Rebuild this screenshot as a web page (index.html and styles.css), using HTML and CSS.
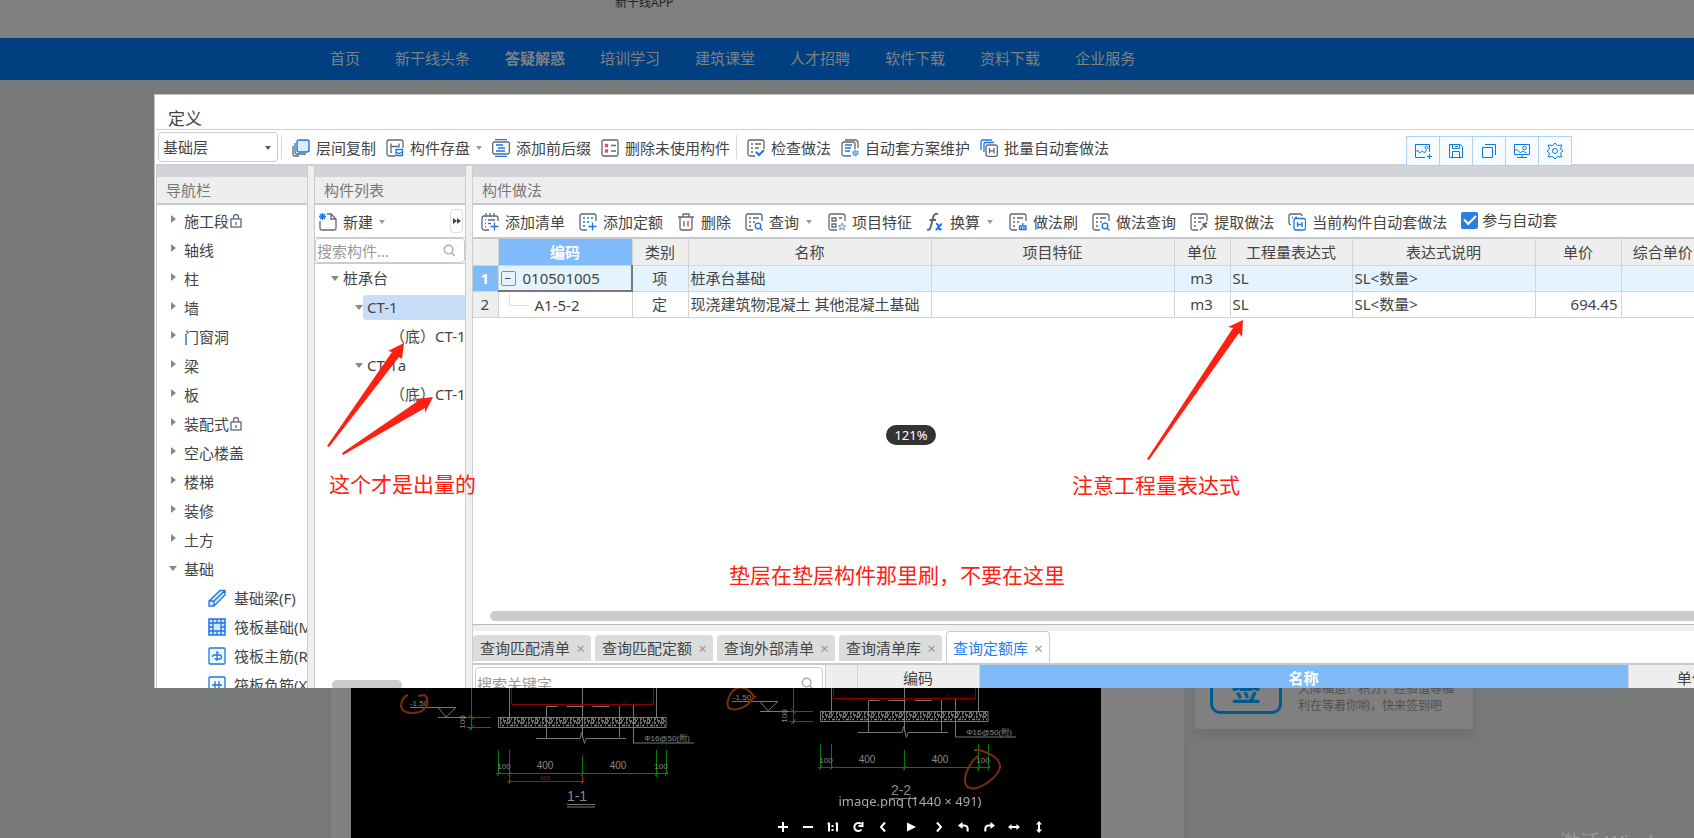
FILE: index.html
```html
<!DOCTYPE html>
<html lang="zh-CN">
<head>
<meta charset="utf-8">
<title>新干线 - 答疑解惑</title>
<link rel="stylesheet" href="styles.css">
</head>
<body>
<svg class="sprite" aria-hidden="true">
  <symbol id="i-copy" viewBox="0 0 18 18"><rect x="5" y="1" width="12" height="12" rx="2" fill="#dcebff" stroke="#1e74e6" stroke-width="1.4"/><path d="M3 4v9a2 2 0 0 0 2 2h9M1 7v8a2 2 0 0 0 2 2h4" class="g"/></symbol>
  <symbol id="i-disk" viewBox="0 0 18 18"><path d="M9 17H3a2 2 0 0 1-2-2V3a2 2 0 0 1 2-2h12a2 2 0 0 1 2 2v6M5 14V4.500M13 4.500v4M5 7.500h8" class="g"/><path d="M10 10.500h6.500v6H10zM10 13l3.200 1.500 3.300-1.500" class="b"/></symbol>
  <symbol id="i-affix" viewBox="0 0 18 18"><path d="M3 .7h12M3 17.300h12M4 6h7M6 9h7M4 12h9" class="b"/><rect x=".7" y="3" width="16.600" height="12" rx="1.500" class="g"/></symbol>
  <symbol id="i-unused" viewBox="0 0 18 18"><rect x="1" y="1" width="16" height="16" rx="1.500" class="g"/><path d="M10 6.500h5M10 12h5" class="g"/><path d="M4 5l3 3M7 5L4 8M4 10.500l3 3m0-3l-3 3" class="r"/></symbol>
  <symbol id="i-check" viewBox="0 0 18 18"><path d="M8 17H3a2 2 0 0 1-2-2V3a2 2 0 0 1 2-2h12a2 2 0 0 1 2 2v7M4 5h2m2 0h6M4 9h2m2 0h4M4 13h2" class="g"/><path d="M9 13l3 3 5-5" class="b w"/></symbol>
  <symbol id="i-plan" viewBox="0 0 18 18"><path d="M10 17H3a2 2 0 0 1-2-2V5a2 2 0 0 1 2-2h9a2 2 0 0 1 2 2v5M4 1h10a3 3 0 0 1 3 3v5" class="g"/><path d="M4 6h7M4 9h6M4 12h5" class="b"/><circle cx="14.500" cy="14" r="2.600" fill="#8fbcf8" stroke="#5f9df0" stroke-width="1.600" stroke-dasharray="1.700 1"/></symbol>
  <symbol id="i-batch" viewBox="0 0 18 18"><path d="M1 11V3a2 2 0 0 1 2-2h9M4 13V5a1.500 1.500 0 0 1 1.500-1.500H14" class="b"/><rect x="6" y="6" width="11.300" height="11.300" rx="2" class="g"/><path d="M9.500 9v5.500m4.500-5.500v5.500m-4.500-2.700H14" class="g"/></symbol>
  <symbol id="i-lock" viewBox="0 0 12 14"><rect x="1" y="5" width="10" height="8" class="g"/><path d="M3.500 5V3a2.500 2.500 0 0 1 5 0v2M6 8v3" class="g"/></symbol>
  <symbol id="i-new" viewBox="0 0 18 18"><path d="M1 8v7.500A1.500 1.500 0 0 0 2.500 17h13a1.500 1.500 0 0 0 1.500-1.500V6l-5-5H8M12 1v5h5" class="g"/><path d="M1 1l5 5M6 1L1 6M3.500 0v7M0 3.500h7" class="b"/></symbol>
  <symbol id="i-find" viewBox="0 0 14 14"><circle cx="6" cy="6" r="4.600" fill="none" stroke="#aaa" stroke-width="1.500"/><path d="M9.500 9.500L12.500 13" stroke="#aaa" stroke-width="1.500"/></symbol>
  <symbol id="i-addlist" viewBox="0 0 18 18"><path d="M8 17H3a2 2 0 0 1-2-2V5a2 2 0 0 1 2-2h12a2 2 0 0 1 2 2v3M5 0v4M9 0v4M13 0v4M4 7h1m2 0h7M4 10.500h1m2 0h3M4 14h1" class="g"/><path d="M13.500 9.500v8M9.500 13.500h8" class="b"/></symbol>
  <symbol id="i-addq" viewBox="0 0 18 18"><path d="M8 17H3a2 2 0 0 1-2-2V3a2 2 0 0 1 2-2h12a2 2 0 0 1 2 2v5" class="g"/><path d="M4 5h2m2 0h2m2 0h2M4 9h2m2 0h2M4 13h2M13.500 9.500v8M9.500 13.500h8" class="b"/></symbol>
  <symbol id="i-trash" viewBox="0 0 18 18"><path d="M1 4h16M6 3.500V1h6v2.500M3 4v11a2 2 0 0 0 2 2h8a2 2 0 0 0 2-2V4" class="g"/><path d="M7 8v5.500M11 8v5.500" class="r"/></symbol>
  <symbol id="i-query" viewBox="0 0 18 18"><path d="M8 17H3a2 2 0 0 1-2-2V3a2 2 0 0 1 2-2h12a2 2 0 0 1 2 2v5M4 5h2m2 0h6M4 9h2m2 0h2M4 13h2" class="g"/><circle cx="13" cy="13" r="2.800" class="b"/><path d="M15 15l2.500 2.500" class="b"/></symbol>
  <symbol id="i-feat" viewBox="0 0 18 18"><path d="M9 17H3a2 2 0 0 1-2-2V3a2 2 0 0 1 2-2h12a2 2 0 0 1 2 2v5M4 5h4v3H4zM11 5h3M4 11h4v3H4z" class="g"/><path d="M14 10l1.200 2.500 2.500.3-1.900 1.700.6 2.500-2.400-1.300-2.400 1.300.6-2.500-1.900-1.700 2.500-.3z" fill="#cfe3ff" stroke="#5f9df0"/></symbol>
  <symbol id="i-fx" viewBox="0 0 18 18"><path d="M1 16.500c2 1 3.300-.5 4-3.500L7 5c.8-3.500 2.500-5 5-4M3.500 7h6.500" class="g w"/><path d="M10 11c2-.5 2 1 2.500 3s1 3 3 2M16 11c-2 0-4 5.500-6.500 5.500" class="b w"/></symbol>
  <symbol id="i-brush" viewBox="0 0 18 18"><path d="M8 17H3a2 2 0 0 1-2-2V3a2 2 0 0 1 2-2h12a2 2 0 0 1 2 2v5M4 5h2m2 0h6M4 9h2m2 0h2M4 13h2" class="g"/><path d="M10.500 16.500v-3.500h6.500v3.500zM13.800 10v3M12.500 14v2.500M15 14v2.500" class="b"/></symbol>
  <symbol id="i-pick" viewBox="0 0 18 18"><path d="M8 17H3a2 2 0 0 1-2-2V3a2 2 0 0 1 2-2h12a2 2 0 0 1 2 2v5M4 5h2m2 0h6M4 9h2m2 0h3M4 13h2M10 17l5-5" class="g"/><path d="M12.500 10.500l4 4M14 12l3-2.500" class="g w"/></symbol>
  <symbol id="i-cur" viewBox="0 0 18 18"><path d="M3 12a2 2 0 0 1-2-2V3a2 2 0 0 1 2-2h9a2 2 0 0 1 2 2M4 4.500h1m2 0h2" class="g"/><rect x="6" y="5.500" width="11.500" height="11.500" rx="2" class="b"/><path d="M9.500 9v5m4.500-5v5m-4.500-2.500H14" class="b"/></symbol>
  <symbol id="i-beam" viewBox="0 0 18 18"><path d="M1 12L12 1.500h5V6L6 17H1zM1 12h5v5M6 12L17 1.500" fill="#d6e8ff" stroke="#1e74e6" stroke-width="1.300"/></symbol>
  <symbol id="i-raft" viewBox="0 0 18 18"><rect x="1" y="1" width="16" height="16" fill="#d6e8ff" stroke="#1e74e6" stroke-width="1.500"/><path d="M5 1v16M9 1v4m0 8v4M13 1v16M1 5h16M1 9h4m8 0h4M1 13h16" class="b"/></symbol>
  <symbol id="i-main" viewBox="0 0 18 18"><rect x="1" y="1" width="16" height="16" rx="1" fill="#f2f8ff" stroke="#1e74e6" stroke-width="1.300"/><path d="M9 14V5l1.500 1M4.500 10q0-2 2-2h5q2 0 2 2t-2 2h-5" class="b"/></symbol>
  <symbol id="i-neg" viewBox="0 0 18 18"><rect x="1" y="1" width="16" height="16" rx="1" fill="#f2f8ff" stroke="#1e74e6" stroke-width="1.300"/><path d="M4 9h10M7 5v8q0 2-2 2M11 5v8q0 2 2 2" class="b"/></symbol>
  <symbol id="s-add" viewBox="0 0 18 18"><path d="M11 15.500H1.500v-13h14V10M1.500 10l2-2 2 3 3-2 2 2 2-3M15.500 12v5M13 14.500h5" class="s"/><circle cx="12.500" cy="5.500" r="1.500" class="s"/></symbol>
  <symbol id="s-save" viewBox="0 0 18 18"><path d="M2.500 2.500h11l2 2v11h-13zM5.500 2.500v4h7v-4M5.500 15.500v-6h7v6M8 4.500h3" class="s"/></symbol>
  <symbol id="s-copy" viewBox="0 0 18 18"><path d="M2.500 5.500h10v10h-10zM5 2.500h10.500V13" class="s"/></symbol>
  <symbol id="s-screen" viewBox="0 0 18 18"><path d="M1.500 2.500h15v10h-15zM1.500 9l2-2 4 4 2-2 4 2M9 12.500v3M4 15.500h10" class="s"/><circle cx="11.500" cy="6" r="1.800" class="s"/></symbol>
  <symbol id="s-gear" viewBox="0 0 18 18"><path d="M9 1l2.300 2.500 4.500-.5-1.300 4 2.500 2-2.500 2 1.300 4-4.500-.5L9 17l-2.300-2.500-4.500.5 1.300-4L1 9l2.500-2-1.300-4 4.500.5z" class="s"/><circle cx="9" cy="9" r="2.500" class="s"/></symbol>
</svg>

<header class="site-top"><a class="app-link" href="#">新干线APP</a></header>
<nav class="site-nav">
  <a href="#">首页</a><a href="#">新干线头条</a><a class="current" href="#">答疑解惑</a><a href="#">培训学习</a><a href="#">建筑课堂</a><a href="#">人才招聘</a><a href="#">软件下载</a><a href="#">资料下载</a><a href="#">企业服务</a>
</nav>
<main class="page">
  <article class="post">
    <div class="post-image">
      <svg class="cad" width="750" height="150" viewBox="351 688 750 150">
        <defs>
          <g id="section" fill="none">
            <g stroke="#777">
              <path d="M410 707.500h46l-10 9.500-8-9.500M438 717.500h29M509.500 680v37M656.500 680v37M582.500 680v58"/>
              <path d="M546.500 706.500h11m9 0h17m9 0h17m9 0h1v31M546.500 706.500v31.500M536 738.500h44l1.500-6 3 11 1.500-5h40M633.500 704v39h60.500"/>
              <rect x="498.500" y="717.500" width="167.500" height="10"/>
            </g>
            <g stroke="#8c8c8c" stroke-width="1.600">
              <path d="M500 719h165" stroke-dasharray="2 1 1 3 3 1 1 2"/>
              <path d="M500 721h165" stroke-dasharray="1 2 3 1 1 1 2 3"/>
              <path d="M500 723h165" stroke-dasharray="2 2 1 1 4 2 1 1"/>
              <path d="M500 725.500h165" stroke-dasharray="1 1 2 3 1 2 3 1"/>
            </g>
            <path d="M511.500 680v24.500h142V680" stroke="#8b0000"/>
            <path d="M623 702.500l2-2 2 2-2 2zM649 702.500l2-2 2 2-2 2z" stroke="#8b0000" stroke-width=".7"/>
            <path d="M471.500 680v50M467 717.500h24M467 727.500h24M469 715l5 5M469 730l5-5M498.500 750v25M509.500 750v25M582.500 756v20M656.500 750v27M666.500 750v25M496 773.500h172M497 776l3-4M508 776l3-4M581 776l3-4M655 776l3-4M665 776l3-4" stroke="#008000"/>
            <g class="dim">
              <text x="504" y="769">100</text><text class="big" x="545" y="769">400</text><text class="big" x="618" y="769">400</text><text x="661" y="769">100</text>
              <text x="462" y="725" transform="rotate(-90 462 722)">100</text>
              <text x="667" y="741">Φ16@50(附)</text>
            </g>
          </g>
        </defs>
        <use href="#section"/>
        <use href="#section" transform="translate(322 -6)"/>
        <g class="dim"><text x="419" y="706">-1.50</text><text x="742" y="700">-1.50</text><text class="sec" x="577" y="801">1-1</text><text class="sec" x="901" y="795">2-2</text></g>
        <path d="M567 804.500h28M567 807h28M889 798.500h28" stroke="#777"/>
        <g fill="none" stroke="#7d2e08">
          <path d="M509.500 774v10M582.500 774v10M507 781.500h78M508 783l3-3M581 783l3-3"/>
          <path d="M408 695c-6 2-9 11-5 15s15 4 20 0 6-13 1-15l-6 1" stroke-width="2"/>
          <path d="M754 697c-5-9-14-12-20-7s-8 15-5 18 13 1 18-3 7-10 9-8" stroke-width="2"/>
          <path d="M974 750c10-1 27 8 26 17s-20 24-30 21-4-23 9-33" stroke-width="2"/>
        </g>
        <text class="orange" x="545" y="780">400</text>
      </svg>
    </div>
  </article>
  <aside class="signin">
    <div class="signin-box">签</div>
    <p class="signin-text">天降福运！积分，经验值等福利在等着你哟，快来签到吧</p>
  </aside>
</main>

<section class="viewer">
  <div class="title">定义</div>
  <div class="bar bar-top">
    <select class="floor" aria-label="楼层"><option>基础层</option></select>
    <i class="sep"></i>
    <button class="tool"><svg><use href="#i-copy"/></svg>层间复制</button>
    <button class="tool"><svg><use href="#i-disk"/></svg>构件存盘<i class="caret"></i></button>
    <button class="tool"><svg><use href="#i-affix"/></svg>添加前后缀</button>
    <button class="tool"><svg><use href="#i-unused"/></svg>删除未使用构件</button>
    <i class="sep"></i>
    <button class="tool"><svg><use href="#i-check"/></svg>检查做法</button>
    <button class="tool"><svg><use href="#i-plan"/></svg>自动套方案维护</button>
    <button class="tool"><svg><use href="#i-batch"/></svg>批量自动套做法</button>
  </div>
  <div class="panes">
    <section class="pane pane-nav">
      <h2>导航栏</h2>
      <ul class="nav-tree">
        <li><i class="closed"></i>施工段<svg class="lock"><use href="#i-lock"/></svg></li>
        <li><i class="closed"></i>轴线</li>
        <li><i class="closed"></i>柱</li>
        <li><i class="closed"></i>墙</li>
        <li><i class="closed"></i>门窗洞</li>
        <li><i class="closed"></i>梁</li>
        <li><i class="closed"></i>板</li>
        <li><i class="closed"></i>装配式<svg class="lock"><use href="#i-lock"/></svg></li>
        <li><i class="closed"></i>空心楼盖</li>
        <li><i class="closed"></i>楼梯</li>
        <li><i class="closed"></i>装修</li>
        <li><i class="closed"></i>土方</li>
        <li><i class="open"></i>基础</li>
        <li class="sub"><svg><use href="#i-beam"/></svg>基础梁(F)</li>
        <li class="sub"><svg><use href="#i-raft"/></svg>筏板基础(M)</li>
        <li class="sub"><svg><use href="#i-main"/></svg>筏板主筋(R)</li>
        <li class="sub"><svg><use href="#i-neg"/></svg>筏板负筋(X)</li>
      </ul>
    </section>
    <section class="pane pane-list">
      <h2>构件列表</h2>
      <div class="bar bar-list">
        <button class="tool"><svg><use href="#i-new"/></svg>新建<i class="caret"></i></button>
        <button class="more" aria-label="更多"><i></i><i></i></button>
      </div>
      <label class="search"><input type="text" placeholder="搜索构件..." aria-label="搜索构件"><svg><use href="#i-find"/></svg></label>
      <ul class="part-tree">
        <li class="lv1"><i class="open"></i><span>桩承台</span></li>
        <li class="lv2 picked"><i class="open"></i><span>CT-1</span></li>
        <li class="lv3"><span>（底）CT-1</span></li>
        <li class="lv2"><i class="open"></i><span>CT-1a</span></li>
        <li class="lv3"><span>（底）CT-1</span></li>
      </ul>
      <div class="thumb thumb-list"></div>
    </section>
    <section class="pane pane-main">
      <h2>构件做法</h2>
      <div class="bar bar-main">
        <button class="tool"><svg><use href="#i-addlist"/></svg>添加清单</button>
        <button class="tool"><svg><use href="#i-addq"/></svg>添加定额</button>
        <button class="tool"><svg><use href="#i-trash"/></svg>删除</button>
        <button class="tool"><svg><use href="#i-query"/></svg>查询<i class="caret"></i></button>
        <button class="tool"><svg><use href="#i-feat"/></svg>项目特征</button>
        <button class="tool"><svg><use href="#i-fx"/></svg>换算<i class="caret"></i></button>
        <button class="tool"><svg><use href="#i-brush"/></svg>做法刷</button>
        <button class="tool"><svg><use href="#i-query"/></svg>做法查询</button>
        <button class="tool"><svg><use href="#i-pick"/></svg>提取做法</button>
        <button class="tool"><svg><use href="#i-cur"/></svg>当前构件自动套做法</button>
        <label class="auto"><input type="checkbox" checked>参与自动套</label>
      </div>
      <div class="grid-wrap">
        <table class="grid">
          <colgroup><col class="c-no"><col class="c-code"><col class="c-kind"><col class="c-name"><col class="c-name"><col class="c-unit"><col class="c-expr"><col class="c-desc"><col class="c-price"><col class="c-total"></colgroup>
          <thead><tr><th></th><th class="hot">编码</th><th>类别</th><th>名称</th><th>项目特征</th><th>单位</th><th>工程量表达式</th><th>表达式说明</th><th>单价</th><th>综合单价</th></tr></thead>
          <tbody>
            <tr class="sel"><th>1</th><td class="cell-on"><button class="fold" aria-label="折叠">−</button>010501005</td><td class="mid">项</td><td>桩承台基础</td><td></td><td class="mid">m3</td><td>SL</td><td>SL&lt;数量&gt;</td><td></td><td></td></tr>
            <tr><th>2</th><td class="child"><i class="elbow"></i>A1-5-2</td><td class="mid">定</td><td>现浇建筑物混凝土 其他混凝土基础</td><td></td><td class="mid">m3</td><td>SL</td><td>SL&lt;数量&gt;</td><td class="num">694.45</td><td></td></tr>
          </tbody>
        </table>
        <div class="thumb thumb-main"></div>
      </div>
      <div class="tabs">
        <button>查询匹配清单<i>×</i></button><button>查询匹配定额<i>×</i></button><button>查询外部清单<i>×</i></button><button>查询清单库<i>×</i></button><button class="on">查询定额库<i>×</i></button>
      </div>
      <div class="lower">
        <div class="lower-left"><label class="search"><input type="text" placeholder="搜索关键字..." aria-label="搜索关键字"><svg><use href="#i-find"/></svg></label></div>
        <div class="lower-right">
          <table class="grid lib"><colgroup><col class="c-lno"><col class="c-lcode"><col class="c-lname"><col class="c-lunit"></colgroup><thead><tr><th></th><th>编码</th><th class="hot">名称</th><th>单位</th></tr></thead></table>
        </div>
      </div>
    </section>
  </div>

  <div class="snap">
    <button aria-label="添加图片"><svg><use href="#s-add"/></svg></button><button aria-label="保存"><svg><use href="#s-save"/></svg></button><button aria-label="复制"><svg><use href="#s-copy"/></svg></button><button aria-label="屏幕"><svg><use href="#s-screen"/></svg></button><button aria-label="设置"><svg><use href="#s-gear"/></svg></button>
  </div>
  <svg class="arrows" width="1100" height="380" viewBox="154 94 1100 380" fill="#ff2012">
    <path d="M1243 320l-15 7 5 1-86 131 2 1 90-127 3 4z"/>
    <path d="M404 343l-16 8 4 1-65 94 2 1 70-90 3 2z"/>
    <path d="M433 397l-17 2 2 2-76 52 1 2 82-47v5z"/>
  </svg>
  <p class="note note-a">这个才是出量的</p>
  <p class="note note-b">注意工程量表达式</p>
  <p class="note note-c">垫层在垫层构件那里刷，不要在这里</p>
  <div class="zoom">121%</div>
</section>

<footer class="controls">
  <div class="caption">image.png (1440 × 491)</div>
  <div class="buttons">
    <button aria-label="放大"><svg viewBox="0 0 12 12"><path d="M6 1v10M1 6h10"/></svg></button>
    <button aria-label="缩小"><svg viewBox="0 0 12 12"><path d="M1 6h10"/></svg></button>
    <button aria-label="原始大小"><svg viewBox="0 0 12 12"><path d="M.5 2.500H2v8M8.500 2.500H10v8M5.500 4v2M5.500 8v2"/></svg></button>
    <button aria-label="重置"><svg viewBox="0 0 12 12"><path d="M9.500 8.500A4 4 0 1 1 9 3M10.500 1v4h-4"/></svg></button>
    <button aria-label="上一张"><svg viewBox="0 0 12 12"><path d="M8 1.500L4 6l4 4.500"/></svg></button>
    <button class="play" aria-label="播放"><svg viewBox="0 0 12 12"><path d="M2 1.500L11 6l-9 4.500z" fill="#fff" stroke="none"/></svg></button>
    <button aria-label="下一张"><svg viewBox="0 0 12 12"><path d="M4 1.500L8 6l-4 4.500"/></svg></button>
    <button aria-label="左转"><svg viewBox="0 0 12 12"><path d="M3 4.500h3.500q4 0 3 6"/><path d="M0 4.500L4.500 1v7z" fill="#fff" stroke="none"/></svg></button>
    <button aria-label="右转"><svg viewBox="0 0 12 12"><path d="M9 4.500H5.500q-4 0-3 6"/><path d="M12 4.500L7.500 1v7z" fill="#fff" stroke="none"/></svg></button>
    <button aria-label="水平翻转"><svg viewBox="0 0 12 12"><path d="M2 6h8"/><path d="M0 6l3.500-3v6zM12 6L8.500 3v6z" fill="#fff" stroke="none"/></svg></button>
    <button aria-label="垂直翻转"><svg viewBox="0 0 12 12"><path d="M6 2v8"/><path d="M6 0l3 3.500H3zM6 12l3-3.500H3z" fill="#fff" stroke="none"/></svg></button>
  </div>
</footer>
<div class="watermark">激活 Windows</div>
</body>
</html>
```
FILE: styles.css
```css
* { box-sizing: border-box; }
body { margin: 0; min-height: 100vh; display: flex; flex-direction: column; overflow: hidden; background: #787a79; color: #444; font: 15px/20px "Noto Sans", "Noto Sans CJK SC", sans-serif; }
button, input, select { font: inherit; color: inherit; margin: 0; }
button { background: none; border: 0; padding: 0; }
ul, p, h2 { margin: 0; padding: 0; list-style: none; }
a { color: inherit; text-decoration: none; }
i { font-style: normal; }
.sprite { position: absolute; width: 0; height: 0; }
.g { fill: none; stroke: #5f6878; stroke-width: 1.3; }
.b { fill: none; stroke: #1e74e6; stroke-width: 1.3; }
.r { fill: none; stroke: #e2323c; stroke-width: 1.3; }
.s { fill: none; stroke: #0a7be0; stroke-width: 1; }
.w { stroke-width: 2; }

/* site page, dimmed */
.site-top { height: 38px; background: #808080; padding-left: 615px; }
.app-link { display: block; width: 80px; color: #222; font-size: 12px; line-height: 16px; margin-top: -5px; }
.site-nav { height: 42px; background: #004080; color: #808080; display: flex; align-items: center; gap: 35px; padding-left: 330px; }
.site-nav .current { font-weight: bold; }
.site-nav a { padding-bottom: 2px; }
.page { flex: 1; display: flex; align-items: flex-start; gap: 11px; padding: 14px 0 0 331px; }
.post { align-self: stretch; width: 853px; background: #808080; padding: 12px 83px 0 20px; display: flex; box-shadow: 0 8px 8px #707170; }
.post-image { flex: 1; background: #000; display: flex; align-items: flex-end; }
.dim text { fill: #8a8a8a; font: 8px "Liberation Sans", "Noto Sans CJK SC", sans-serif; text-anchor: middle; }
.dim .big { font-size: 10px; }
.dim .sec { font-size: 14px; }
.orange { fill: #7d2e08; font: 6px "Liberation Sans", sans-serif; text-anchor: middle; }
.signin { width: 278px; min-height: 635px; background: #808080; border-radius: 2px; box-shadow: 0 8px 12px #6f6f6f; display: flex; align-items: flex-end; gap: 16px; padding: 15px; }
.signin-box { width: 72px; height: 72px; border: 3px solid #005a8c; border-radius: 10px; color: #005a8c; font-size: 30px; line-height: 40px; font-weight: bold; text-align: center; padding-top: 24px; }
.signin-text { width: 160px; font-size: 12px; line-height: 17px; color: #505050; }

/* enlarged picture */
.viewer { position: fixed; left: 154px; top: 94px; right: 0; bottom: 150px; background: #fff; border: 1px solid #c3c4c4; border-width: 1px 0 0 1px; overflow: hidden; display: flex; flex-direction: column; padding-left: 1px; }
.title { height: 35px; border-bottom: 1px solid #d0d0d0; padding: 14px 0 0 12px; font-size: 17px; flex: none; }
.bar { display: flex; align-items: center; flex: none; white-space: nowrap; }
.bar-top { height: 36px; gap: 10px; padding-left: 2px; border-bottom: 2px solid #d0d0d0; }
.floor { width: 120px; height: 30px; border: 1px solid #ccc; border-radius: 4px; padding: 0 4px; appearance: none; background: #fff; }
.bar-top::before { content: ""; position: absolute; left: 110px; top: 51px; border: 3px solid transparent; border-top: 4px solid #555; }
.floor + .sep { margin: 0 0 0 -7px; }
.sep { width: 1px; height: 24px; background: #d8d8d8; }
.tool + .sep { margin: 0 0 0 -4px; }
.tool { display: flex; align-items: center; gap: 6px; padding-top: 2px; }
.tool svg, .sub svg { width: 18px; height: 18px; flex: none; }
.caret { border: 3px solid transparent; border-top: 4px solid #999; border-bottom: 0; }
.panes { flex: 1; display: flex; min-height: 0; background: #efefef; gap: 6px; }
.pane { background: #fff; border: solid #ccc; border-width: 0 1px; display: flex; flex-direction: column; overflow: hidden; min-width: 0; }
.pane h2 { font-size: 15px; font-weight: normal; color: #777; line-height: 27px; height: 39px; padding-left: 9px; background: #eee; border-top: 11px solid #d2d4da; border-bottom: 2px solid #c6c9ce; flex: none; }
.pane-nav { width: 152px; flex: none; }
.pane-list { width: 152px; flex: none; position: relative; }
.pane-main { flex: 1; border-right: 0; background: #efefef; }
.nav-tree { padding-top: 1px; }
.nav-tree li { height: 29px; display: flex; align-items: center; white-space: nowrap; padding-left: 14px; flex: none; }
.nav-tree li i { margin-right: 8px; width: 5px; margin-top: -3px; }
.closed { border: 4px solid transparent; border-left: 5px solid #888; border-right: 0; }
.open { border: 4px solid transparent; border-top: 5px solid #888; border-bottom: 0; width: 8px; }
.nav-tree li .open { width: 8px; margin: 0 7px 0 -2px; }
.nav-tree .lock { width: 12px; height: 14px; margin-left: 1px; }
.nav-tree .sub { padding-left: 51px; gap: 8px; }
.bar-list { height: 33px; justify-content: space-between; padding: 0 2px 0 4px; border-bottom: 1px solid #ccc; }
.more { width: 13px; height: 24px; border: 1px solid #ddd; border-radius: 4px; display: flex; align-items: center; justify-content: center; }
.more i { border: 3px solid transparent; border-left: 4px solid #444; border-right: 0; }
.search { display: flex; align-items: center; height: 25px; border: 1px solid #ccc; border-radius: 4px; padding: 0 8px 0 1px; flex: none; background: #fff; }
.search input { flex: 1; min-width: 0; border: 0; outline: 0; padding: 0; background: none; }
.search input::placeholder { color: #999; }
.search svg { width: 13px; height: 13px; }
.part-tree { border-top: 1px solid #ccc; }
.part-tree li { height: 29px; display: flex; align-items: center; white-space: nowrap; }
.part-tree span { flex: 1; line-height: 25px; }
.lv1 { padding-left: 16px; gap: 4px; }
.lv2 { padding-left: 40px; }
.lv2 span { padding-left: 4px; }
.picked span { background: #c7ddf8; border-radius: 4px 0 0 4px; }
.lv3 { padding-left: 75px; }
.thumb { position: absolute; background: #cbcbcb; border-radius: 5px; height: 10px; }
.thumb-list { left: 17px; width: 70px; bottom: -2px; }
.bar-main { height: 34px; gap: 14px; padding-left: 8px; background: #fff; border-bottom: 2px solid #c6c9ce; }
.bar-main .caret { margin: 0 2px 0 1px; }
.auto { display: flex; align-items: center; gap: 4px; margin-top: -2px; }
.auto input { appearance: none; width: 17px; height: 17px; border-radius: 2px; background: #2a7de1; display: grid; place-items: center; }
.auto input::before { content: ""; width: 10px; height: 5px; border: solid #fff; border-width: 0 0 2px 2px; transform: rotate(-45deg); margin-bottom: 3px; }
.grid-wrap { flex: 1; min-height: 0; background: #fff; border-bottom: 1px solid #bbb; overflow: hidden; position: relative; }
.thumb-main { left: 17px; right: -10px; bottom: 3px; }
.grid { width: 1232px; table-layout: fixed; border-collapse: collapse; }
.grid th, .grid td { border: solid #d4d4d4; border-width: 0 1px 1px 0; padding: 0 3px 0 2px; height: 26px; white-space: nowrap; overflow: hidden; text-align: left; }
.grid th { background: #eee; font-weight: normal; text-align: center; }
.grid thead th { height: 26px; padding: 0; }
.grid .hot { background: #7fbafa; color: #fff; font-weight: bold; }
.grid .sel { background: #e4f3fe; }
.grid .sel th { background: #7fbafa; color: #fff; font-weight: bold; }
.grid .mid { text-align: center; }
.grid .num { text-align: right; }
.grid .cell-on { border: solid #777; border-width: 0 2px 2px 0; }
.fold { width: 15px; height: 15px; border: 1px solid #888; border-radius: 2px; line-height: 12px; margin-right: 7px; font-size: 12px; vertical-align: 1px; }
.grid .child { padding-left: 10px; }
.elbow { display: inline-block; width: 20px; height: 12px; border: solid #ddd; border-width: 0 0 1px 1px; margin-right: 6px; vertical-align: 5px; }
.c-no { width: 25px; } .c-code { width: 134px; } .c-kind { width: 56px; } .c-name { width: 243px; } .c-unit { width: 56px; } .c-expr { width: 122px; } .c-desc { width: 183px; } .c-price { width: 86px; }
.tabs { display: flex; align-items: flex-end; gap: 4px; margin-top: 6px; height: 34px; background: #fff; border-bottom: 2px solid #c6c9ce; flex: none; }
.tabs button { height: 26px; background: #dcdcdc; border-radius: 4px 4px 0 0; padding: 0 6px 0 7px; margin-bottom: 2px; white-space: nowrap; }
.tabs i { color: #999; margin-left: 6px; display: inline-block; width: 9px; }
.tabs .on { height: 32px; margin-bottom: 0; background: #fff; color: #1e7fee; border: 1px solid #ccc; border-bottom: 0; padding-left: 6px; }
.lower { display: flex; gap: 6px; height: 23px; flex: none; }
.lower-left { width: 353px; padding: 2px 2px 0; background: #fff; border-right: 1px solid #ccc; flex: none; }
.lower-left .search { height: 33px; }
.lower-right { flex: 1; overflow: hidden; }
.lib { width: 924px; }
.c-lno { width: 25px; } .c-lcode { width: 122px; } .c-lname { width: 649px; }

/* over the picture */
.snap { position: absolute; left: 1251px; top: 41px; display: flex; border: 1px solid #a9d2f5; background: #f7fbff; }
.snap button { width: 33px; height: 28px; display: grid; place-items: center; }
.snap button:first-child { width: 32px; }
.snap button + button { border-left: 1px solid #a9d2f5; }
.snap svg { width: 18px; height: 18px; }
.arrows { position: absolute; left: -1px; top: -1px; }
.note { position: absolute; color: #ff2012; font-size: 21px; line-height: 30px; white-space: nowrap; }
.note-a { left: 174px; top: 374px; }
.note-b { left: 917px; top: 375px; }
.note-c { left: 574px; top: 465px; }
.zoom { position: absolute; left: 731px; top: 330px; width: 50px; height: 20px; border-radius: 10px; background: #333; color: #fff; font-size: 13px; text-align: center; }
.controls { position: fixed; left: 771px; bottom: 0; }
.caption { width: 278px; height: 14px; font-size: 13px; line-height: 14px; text-align: center; color: #aaa; overflow: hidden; margin-bottom: 8px; }
.buttons { display: flex; gap: 1px; }
.buttons button { width: 24px; height: 22px; display: grid; place-items: center; }
.buttons .play { width: 30px; }
.buttons svg { width: 12px; height: 12px; fill: none; stroke: #fff; stroke-width: 2; }
.watermark { position: fixed; left: 1560px; bottom: -20px; font-size: 20px; line-height: 30px; white-space: nowrap; color: #999; }
```
